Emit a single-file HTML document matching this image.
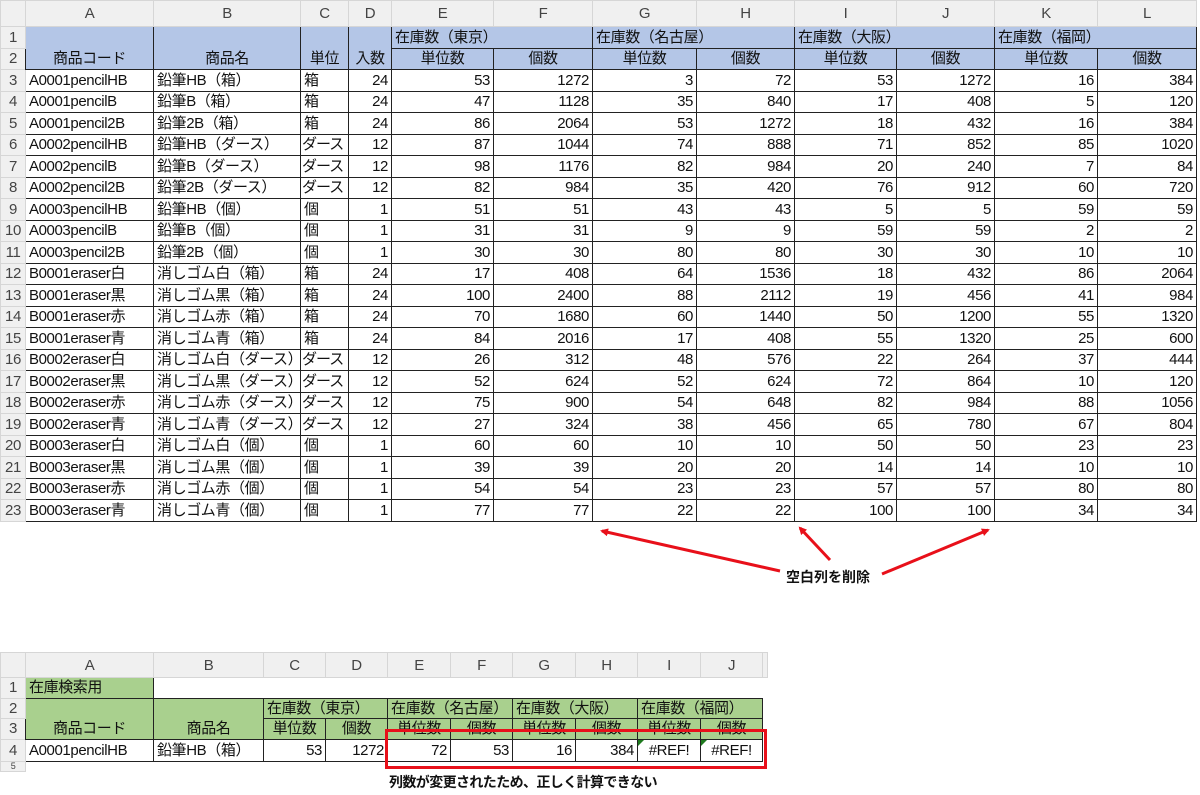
<!DOCTYPE html>
<html><head><meta charset="utf-8"><style>
body{margin:0;width:1200px;height:795px;background:#fff;position:relative;overflow:hidden;font-family:"Liberation Sans","Noto Sans CJK JP",sans-serif;color:#111}
table{border-collapse:collapse;table-layout:fixed;position:absolute;font-size:15px;letter-spacing:-0.4px}
td{padding:0 3px;white-space:nowrap;overflow:hidden;border:1px solid #222;line-height:1}
td.h{background:#f0f0f0;border:1px solid #d6d6d6;color:#444;text-align:center;font-size:15px}
td.rn{background:#f0f0f0;border:1px solid #d6d6d6;color:#444;text-align:center;padding:0}
td.b{background:#b4c6e7}
td.g{background:#a9d08e}
td.c{text-align:center}
td.r{text-align:right}
td.bt{vertical-align:bottom;text-align:center;padding-bottom:3px}
td.n{border:none}
td.k{padding:0 1px;letter-spacing:-1px}
#t1 tr{height:21.5px}
#t1 tr.hd{height:26px}
#t2 tr{height:20.5px}
#t2 tr.hd{height:25px}
.tri{position:relative}
.tri:before{content:"";position:absolute;left:0;top:0;border-top:6px solid #1e7a1e;border-right:6px solid transparent}
</style></head><body>
<table id="t1" style="left:0;top:0;width:1196px">
<colgroup><col style="width:25px"><col style="width:128px"><col style="width:147px"><col style="width:48px"><col style="width:43px"><col style="width:102px"><col style="width:99px"><col style="width:104px"><col style="width:98px"><col style="width:102px"><col style="width:98px"><col style="width:103px"><col style="width:99px"></colgroup>
<tr class="hd"><td class="h"></td><td class="h">A</td><td class="h">B</td><td class="h">C</td><td class="h">D</td><td class="h">E</td><td class="h">F</td><td class="h">G</td><td class="h">H</td><td class="h">I</td><td class="h">J</td><td class="h">K</td><td class="h">L</td></tr>
<tr><td class="rn">1</td><td class="b bt" rowspan="2">商品コード</td><td class="b bt" rowspan="2">商品名</td><td class="b bt" rowspan="2">単位</td><td class="b bt" rowspan="2">入数</td><td class="b" colspan="2">在庫数（東京）</td><td class="b" colspan="2">在庫数（名古屋）</td><td class="b" colspan="2">在庫数（大阪）</td><td class="b" colspan="2">在庫数（福岡）</td></tr>
<tr><td class="rn">2</td><td class="b c">単位数</td><td class="b c">個数</td><td class="b c">単位数</td><td class="b c">個数</td><td class="b c">単位数</td><td class="b c">個数</td><td class="b c">単位数</td><td class="b c">個数</td></tr>
<tr><td class="rn">3</td><td>A0001pencilHB</td><td>鉛筆HB（箱）</td><td>箱</td><td class="r">24</td><td class="r">53</td><td class="r">1272</td><td class="r">3</td><td class="r">72</td><td class="r">53</td><td class="r">1272</td><td class="r">16</td><td class="r">384</td></tr>
<tr><td class="rn">4</td><td>A0001pencilB</td><td>鉛筆B（箱）</td><td>箱</td><td class="r">24</td><td class="r">47</td><td class="r">1128</td><td class="r">35</td><td class="r">840</td><td class="r">17</td><td class="r">408</td><td class="r">5</td><td class="r">120</td></tr>
<tr><td class="rn">5</td><td>A0001pencil2B</td><td>鉛筆2B（箱）</td><td>箱</td><td class="r">24</td><td class="r">86</td><td class="r">2064</td><td class="r">53</td><td class="r">1272</td><td class="r">18</td><td class="r">432</td><td class="r">16</td><td class="r">384</td></tr>
<tr><td class="rn">6</td><td>A0002pencilHB</td><td>鉛筆HB（ダース）</td><td class="k">ダース</td><td class="r">12</td><td class="r">87</td><td class="r">1044</td><td class="r">74</td><td class="r">888</td><td class="r">71</td><td class="r">852</td><td class="r">85</td><td class="r">1020</td></tr>
<tr><td class="rn">7</td><td>A0002pencilB</td><td>鉛筆B（ダース）</td><td class="k">ダース</td><td class="r">12</td><td class="r">98</td><td class="r">1176</td><td class="r">82</td><td class="r">984</td><td class="r">20</td><td class="r">240</td><td class="r">7</td><td class="r">84</td></tr>
<tr><td class="rn">8</td><td>A0002pencil2B</td><td>鉛筆2B（ダース）</td><td class="k">ダース</td><td class="r">12</td><td class="r">82</td><td class="r">984</td><td class="r">35</td><td class="r">420</td><td class="r">76</td><td class="r">912</td><td class="r">60</td><td class="r">720</td></tr>
<tr><td class="rn">9</td><td>A0003pencilHB</td><td>鉛筆HB（個）</td><td>個</td><td class="r">1</td><td class="r">51</td><td class="r">51</td><td class="r">43</td><td class="r">43</td><td class="r">5</td><td class="r">5</td><td class="r">59</td><td class="r">59</td></tr>
<tr><td class="rn">10</td><td>A0003pencilB</td><td>鉛筆B（個）</td><td>個</td><td class="r">1</td><td class="r">31</td><td class="r">31</td><td class="r">9</td><td class="r">9</td><td class="r">59</td><td class="r">59</td><td class="r">2</td><td class="r">2</td></tr>
<tr><td class="rn">11</td><td>A0003pencil2B</td><td>鉛筆2B（個）</td><td>個</td><td class="r">1</td><td class="r">30</td><td class="r">30</td><td class="r">80</td><td class="r">80</td><td class="r">30</td><td class="r">30</td><td class="r">10</td><td class="r">10</td></tr>
<tr><td class="rn">12</td><td>B0001eraser白</td><td>消しゴム白（箱）</td><td>箱</td><td class="r">24</td><td class="r">17</td><td class="r">408</td><td class="r">64</td><td class="r">1536</td><td class="r">18</td><td class="r">432</td><td class="r">86</td><td class="r">2064</td></tr>
<tr><td class="rn">13</td><td>B0001eraser黒</td><td>消しゴム黒（箱）</td><td>箱</td><td class="r">24</td><td class="r">100</td><td class="r">2400</td><td class="r">88</td><td class="r">2112</td><td class="r">19</td><td class="r">456</td><td class="r">41</td><td class="r">984</td></tr>
<tr><td class="rn">14</td><td>B0001eraser赤</td><td>消しゴム赤（箱）</td><td>箱</td><td class="r">24</td><td class="r">70</td><td class="r">1680</td><td class="r">60</td><td class="r">1440</td><td class="r">50</td><td class="r">1200</td><td class="r">55</td><td class="r">1320</td></tr>
<tr><td class="rn">15</td><td>B0001eraser青</td><td>消しゴム青（箱）</td><td>箱</td><td class="r">24</td><td class="r">84</td><td class="r">2016</td><td class="r">17</td><td class="r">408</td><td class="r">55</td><td class="r">1320</td><td class="r">25</td><td class="r">600</td></tr>
<tr><td class="rn">16</td><td>B0002eraser白</td><td>消しゴム白（ダース）</td><td class="k">ダース</td><td class="r">12</td><td class="r">26</td><td class="r">312</td><td class="r">48</td><td class="r">576</td><td class="r">22</td><td class="r">264</td><td class="r">37</td><td class="r">444</td></tr>
<tr><td class="rn">17</td><td>B0002eraser黒</td><td>消しゴム黒（ダース）</td><td class="k">ダース</td><td class="r">12</td><td class="r">52</td><td class="r">624</td><td class="r">52</td><td class="r">624</td><td class="r">72</td><td class="r">864</td><td class="r">10</td><td class="r">120</td></tr>
<tr><td class="rn">18</td><td>B0002eraser赤</td><td>消しゴム赤（ダース）</td><td class="k">ダース</td><td class="r">12</td><td class="r">75</td><td class="r">900</td><td class="r">54</td><td class="r">648</td><td class="r">82</td><td class="r">984</td><td class="r">88</td><td class="r">1056</td></tr>
<tr><td class="rn">19</td><td>B0002eraser青</td><td>消しゴム青（ダース）</td><td class="k">ダース</td><td class="r">12</td><td class="r">27</td><td class="r">324</td><td class="r">38</td><td class="r">456</td><td class="r">65</td><td class="r">780</td><td class="r">67</td><td class="r">804</td></tr>
<tr><td class="rn">20</td><td>B0003eraser白</td><td>消しゴム白（個）</td><td>個</td><td class="r">1</td><td class="r">60</td><td class="r">60</td><td class="r">10</td><td class="r">10</td><td class="r">50</td><td class="r">50</td><td class="r">23</td><td class="r">23</td></tr>
<tr><td class="rn">21</td><td>B0003eraser黒</td><td>消しゴム黒（個）</td><td>個</td><td class="r">1</td><td class="r">39</td><td class="r">39</td><td class="r">20</td><td class="r">20</td><td class="r">14</td><td class="r">14</td><td class="r">10</td><td class="r">10</td></tr>
<tr><td class="rn">22</td><td>B0003eraser赤</td><td>消しゴム赤（個）</td><td>個</td><td class="r">1</td><td class="r">54</td><td class="r">54</td><td class="r">23</td><td class="r">23</td><td class="r">57</td><td class="r">57</td><td class="r">80</td><td class="r">80</td></tr>
<tr><td class="rn">23</td><td>B0003eraser青</td><td>消しゴム青（個）</td><td>個</td><td class="r">1</td><td class="r">77</td><td class="r">77</td><td class="r">22</td><td class="r">22</td><td class="r">100</td><td class="r">100</td><td class="r">34</td><td class="r">34</td></tr>
</table>

<svg style="position:absolute;left:0;top:0" width="1200" height="795">
<defs><marker id="ah" markerWidth="8" markerHeight="8" refX="6" refY="4" orient="auto" markerUnits="userSpaceOnUse"><path d="M0,0 L8,4 L0,8 z" fill="#e8101a"/></marker></defs>
<g stroke="#e8101a" stroke-width="3" fill="none">
<line x1="780" y1="571" x2="602" y2="531" marker-end="url(#ah)"/>
<line x1="830" y1="560" x2="800" y2="528" marker-end="url(#ah)"/>
<line x1="882" y1="574" x2="988" y2="530" marker-end="url(#ah)"/>
</g>
<text x="786" y="582" font-size="14" font-weight="bold" font-family="Liberation Sans, Noto Sans CJK JP, sans-serif" fill="#111">空白列を削除</text>
<text x="389" y="787" font-size="14" font-weight="bold" letter-spacing="-0.6" font-family="Liberation Sans, Noto Sans CJK JP, sans-serif" fill="#111">列数が変更されたため、正しく計算できない</text>
</svg>

<table id="t2" style="left:0;top:652px;width:767px">
<colgroup><col style="width:25px"><col style="width:128px"><col style="width:110px"><col style="width:62px"><col style="width:62px"><col style="width:63px"><col style="width:62px"><col style="width:63px"><col style="width:62px"><col style="width:63px"><col style="width:62px"><col style="width:5px"></colgroup>
<tr class="hd"><td class="h"></td><td class="h">A</td><td class="h">B</td><td class="h">C</td><td class="h">D</td><td class="h">E</td><td class="h">F</td><td class="h">G</td><td class="h">H</td><td class="h">I</td><td class="h">J</td><td class="h"></td></tr>
<tr><td class="rn">1</td><td class="g">在庫検索用</td><td class="n" colspan="10"></td></tr>
<tr><td class="rn">2</td><td class="g bt" rowspan="2">商品コード</td><td class="g bt" rowspan="2">商品名</td><td class="g" colspan="2">在庫数（東京）</td><td class="g" colspan="2">在庫数（名古屋）</td><td class="g" colspan="2">在庫数（大阪）</td><td class="g" colspan="2">在庫数（福岡）</td><td class="n"></td></tr>
<tr><td class="rn">3</td><td class="g c">単位数</td><td class="g c">個数</td><td class="g c">単位数</td><td class="g c">個数</td><td class="g c">単位数</td><td class="g c">個数</td><td class="g c">単位数</td><td class="g c">個数</td><td class="n"></td></tr>
<tr style="height:22px"><td class="rn">4</td><td>A0001pencilHB</td><td>鉛筆HB（箱）</td><td class="r">53</td><td class="r">1272</td><td class="r">72</td><td class="r">53</td><td class="r">16</td><td class="r">384</td><td class="c tri">#REF!</td><td class="c tri">#REF!</td><td class="n"></td></tr>
<tr style="height:9px"><td class="rn" style="font-size:9px;vertical-align:top">5</td><td class="n" colspan="11"></td></tr>
</table>
<div style="position:absolute;left:385px;top:729px;width:376px;height:34px;border:3px solid #e8101a"></div>
</body></html>
